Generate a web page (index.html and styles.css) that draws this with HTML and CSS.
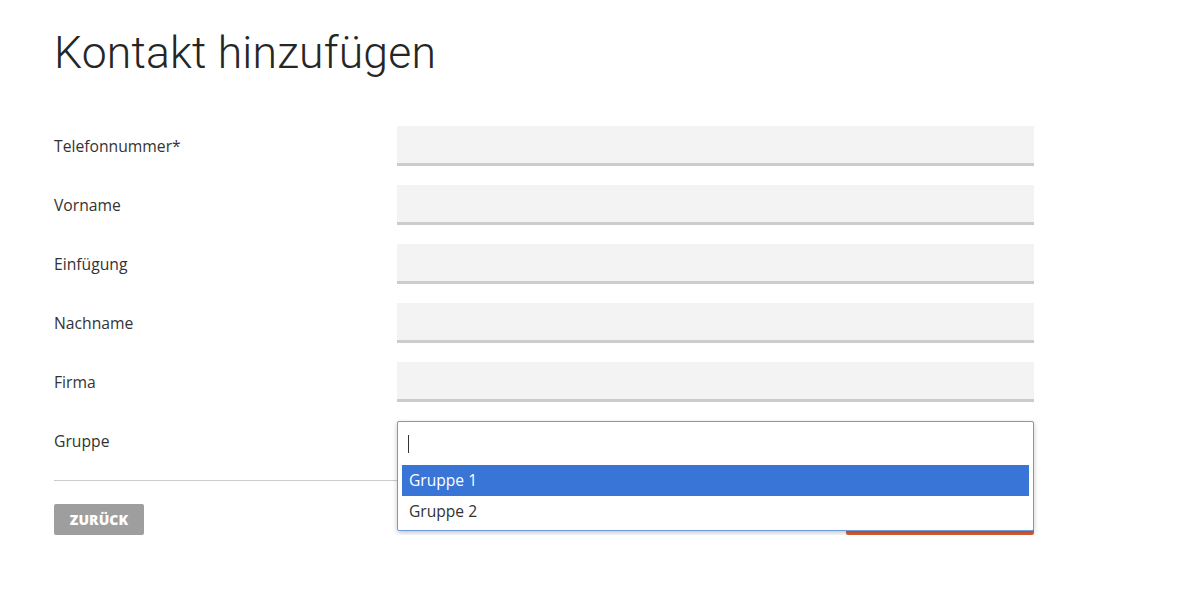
FILE: index.html
```html
<!DOCTYPE html>
<html lang="de">
<head>
<meta charset="utf-8">
<title>Kontakt hinzufügen</title>
<link rel="stylesheet" href="styles.css">
</head>
<body>
<main class="page">
  <h1 class="title">Kontakt hinzufügen</h1>
  <form class="form">
    <div class="row">
      <label class="label">Telefonnummer*</label>
      <div class="field"></div>
    </div>
    <div class="row">
      <label class="label">Vorname</label>
      <div class="field"></div>
    </div>
    <div class="row">
      <label class="label">Einfügung</label>
      <div class="field"></div>
    </div>
    <div class="row">
      <label class="label">Nachname</label>
      <div class="field"></div>
    </div>
    <div class="row">
      <label class="label">Firma</label>
      <div class="field"></div>
    </div>
    <div class="row">
      <label class="label">Gruppe</label>
      <div class="field field-select">
        <div class="dropdown">
          <div class="search"><span class="caret"></span></div>
          <ul class="options">
            <li class="option option-active">Gruppe 1</li>
            <li class="option">Gruppe 2</li>
          </ul>
        </div>
      </div>
    </div>
    <hr class="divider">
    <div class="actions">
      <button type="button" class="btn btn-back">Zurück</button>
      <button type="button" class="btn btn-save">Speichern</button>
    </div>
  </form>
</main>
</body>
</html>
```
FILE: styles.css
```css
html, body {
  margin: 0;
  padding: 0;
  background: #ffffff;
}

body {
  font-family: "Open Sans", "Liberation Sans", sans-serif;
  color: #333333;
}

.page {
  padding: 25px 0 0 54px;
  width: 980px;
}

.title {
  margin: 0;
  font-family: Roboto, "Liberation Sans", sans-serif;
  font-weight: 300;
  font-size: 44.5px;
  line-height: 56px;
  color: #262626;
  letter-spacing: 0.2px;
}

.form {
  margin-top: 45px;
  display: flex;
  flex-direction: column;
}

.row {
  display: grid;
  grid-template-columns: 343px 637px;
  align-items: center;
  margin-bottom: 19px;
}

.label {
  font-size: 15.7px;
  color: #333333;
}

.field {
  height: 37px;
  background: #f3f3f3;
  border-bottom: 3px solid #cccccc;
}

.field-select {
  position: relative;
}

.dropdown {
  position: absolute;
  top: 0;
  left: 0;
  right: 0;
  z-index: 2;
  background: #ffffff;
  border: 1px solid #6e9ad9;
  border-radius: 2px;
  box-shadow: 0 2px 5px rgba(0, 0, 0, 0.22);
  padding: 0 4px 3px 4px;
}

.search {
  height: 43px;
  display: flex;
  align-items: center;
  padding-left: 6px;
}

.caret {
  width: 1px;
  height: 18px;
  background: #333333;
}

.options {
  list-style: none;
  margin: 0;
  padding: 0;
}

.option {
  height: 31px;
  line-height: 31px;
  padding-left: 7px;
  font-size: 15.6px;
  color: #333333;
}

.option-active {
  background: #3875d7;
  color: #ffffff;
}

.divider {
  margin: 0;
  border: 0;
  border-top: 1px solid #cccccc;
}

.actions {
  margin-top: 23px;
  display: flex;
  justify-content: space-between;
}

.btn {
  height: 31px;
  border: 0;
  border-radius: 2px;
  font-family: "Open Sans", "Liberation Sans", sans-serif;
  font-weight: 800;
  font-size: 14px;
  text-transform: uppercase;
  color: #ffffff;
  letter-spacing: 0.1px;
  cursor: pointer;
}

.btn-back {
  width: 90px;
  background: #9e9e9e;
}

.btn-save {
  width: 188px;
  background: #d95f38;
}
```
